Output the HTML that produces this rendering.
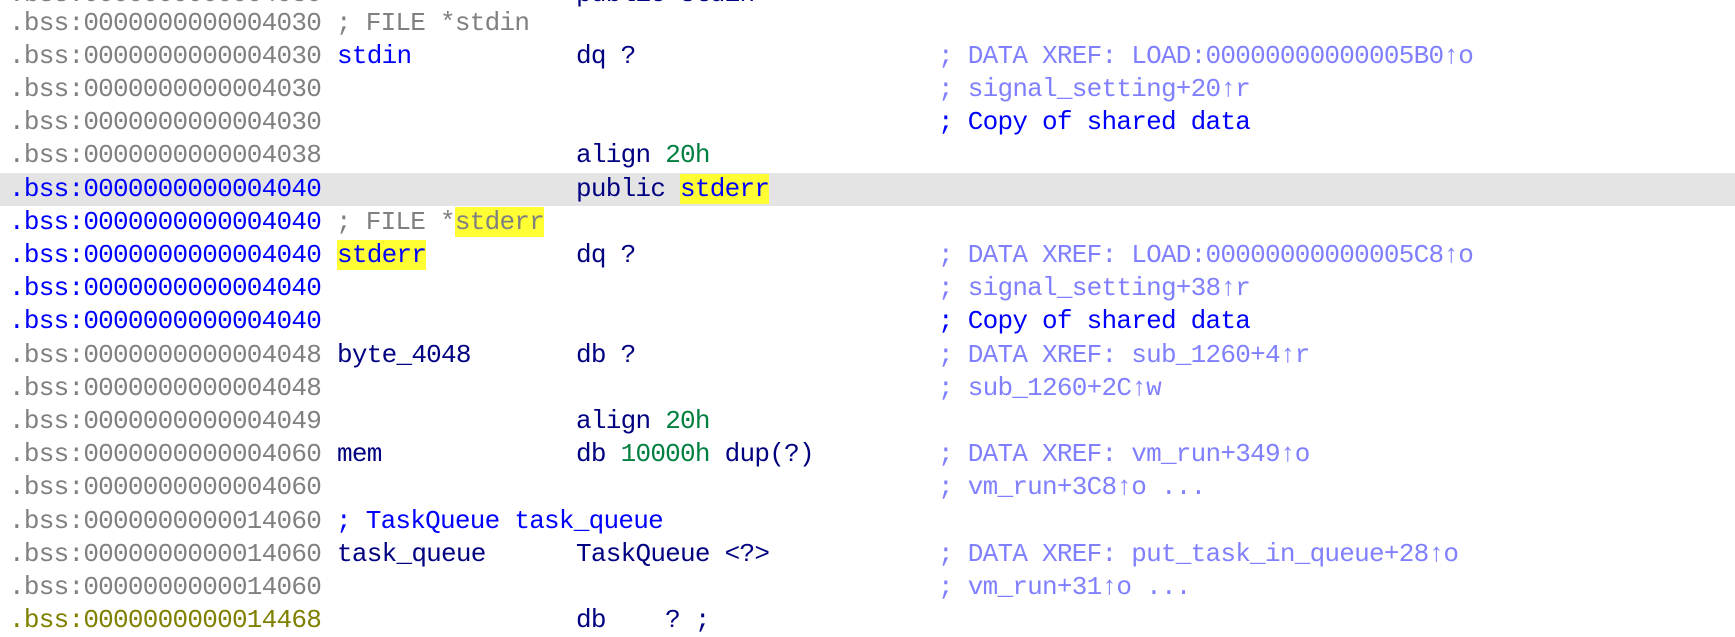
<!DOCTYPE html>
<html><head><meta charset="utf-8"><style>
html,body{margin:0;padding:0;width:1735px;height:635px;overflow:hidden;background:#fff;}
.r{position:absolute;left:0;width:1735px;height:33.2px;line-height:33.2px;font-family:"Liberation Mono",monospace;font-size:26px;letter-spacing:-0.74px;white-space:pre;}
.r span{position:absolute;top:0;}
.a{left:9px;color:#808080}
.ab{left:9px;color:#0000ff}
.ao{left:9px;color:#808000}
.n{left:337px;color:#0000ff}
.nn{left:337px;color:#000080}
.i{left:576px;color:#000080}
.c{left:938px;color:#8080ff}
.cb{left:938px;color:#0000ff}
.num{color:#008040}
.y{background:#ffff33}
.hl{background:#e4e4e4}
b{font-weight:normal}
</style></head><body>
<div class="r" style="top:-22px"><span class="a">.bss:0000000000004030</span><span class="i">public stdin</span></div>
<div class="r" style="top:6.6px"><span class="a">.bss:0000000000004030 ; FILE *stdin</span></div>
<div class="r" style="top:39.8px"><span class="a">.bss:0000000000004030</span><span class="n">stdin</span><span class="i">dq ?</span><span class="c">; DATA XREF: LOAD:00000000000005B0↑o</span></div>
<div class="r" style="top:73px"><span class="a">.bss:0000000000004030</span><span class="c">; signal_setting+20↑r</span></div>
<div class="r" style="top:106.2px"><span class="a">.bss:0000000000004030</span><span class="cb">; Copy of shared data</span></div>
<div class="r" style="top:139.4px"><span class="a">.bss:0000000000004038</span><span class="i">align <b class="num">20h</b></span></div>
<div class="r hl" style="top:172.6px"><span class="ab">.bss:0000000000004040</span><span class="i">public <b class="y" style="color:#0000ff">stderr</b></span></div>
<div class="r" style="top:205.8px"><span class="ab">.bss:0000000000004040 <b style="color:#808080">; FILE *<b class="y">stderr</b></b></span></div>
<div class="r" style="top:239px"><span class="ab">.bss:0000000000004040</span><span class="n"><b class="y">stderr</b></span><span class="i">dq ?</span><span class="c">; DATA XREF: LOAD:00000000000005C8↑o</span></div>
<div class="r" style="top:272.2px"><span class="ab">.bss:0000000000004040</span><span class="c">; signal_setting+38↑r</span></div>
<div class="r" style="top:305.4px"><span class="ab">.bss:0000000000004040</span><span class="cb">; Copy of shared data</span></div>
<div class="r" style="top:338.6px"><span class="a">.bss:0000000000004048</span><span class="nn">byte_4048</span><span class="i">db ?</span><span class="c">; DATA XREF: sub_1260+4↑r</span></div>
<div class="r" style="top:371.8px"><span class="a">.bss:0000000000004048</span><span class="c">; sub_1260+2C↑w</span></div>
<div class="r" style="top:405px"><span class="a">.bss:0000000000004049</span><span class="i">align <b class="num">20h</b></span></div>
<div class="r" style="top:438.2px"><span class="a">.bss:0000000000004060</span><span class="nn">mem</span><span class="i">db <b class="num">10000h</b> dup(?)</span><span class="c">; DATA XREF: vm_run+349↑o</span></div>
<div class="r" style="top:471.4px"><span class="a">.bss:0000000000004060</span><span class="c">; vm_run+3C8↑o ...</span></div>
<div class="r" style="top:504.6px"><span class="a">.bss:0000000000014060 <b style="color:#0000ff">; TaskQueue task_queue</b></span></div>
<div class="r" style="top:537.8px"><span class="a">.bss:0000000000014060</span><span class="nn">task_queue</span><span class="i">TaskQueue &lt;?&gt;</span><span class="c">; DATA XREF: put_task_in_queue+28↑o</span></div>
<div class="r" style="top:571px"><span class="a">.bss:0000000000014060</span><span class="c">; vm_run+31↑o ...</span></div>
<div class="r" style="top:604.2px"><span class="ao">.bss:0000000000014468</span><span class="i">db    ? ;</span></div>
</body></html>
